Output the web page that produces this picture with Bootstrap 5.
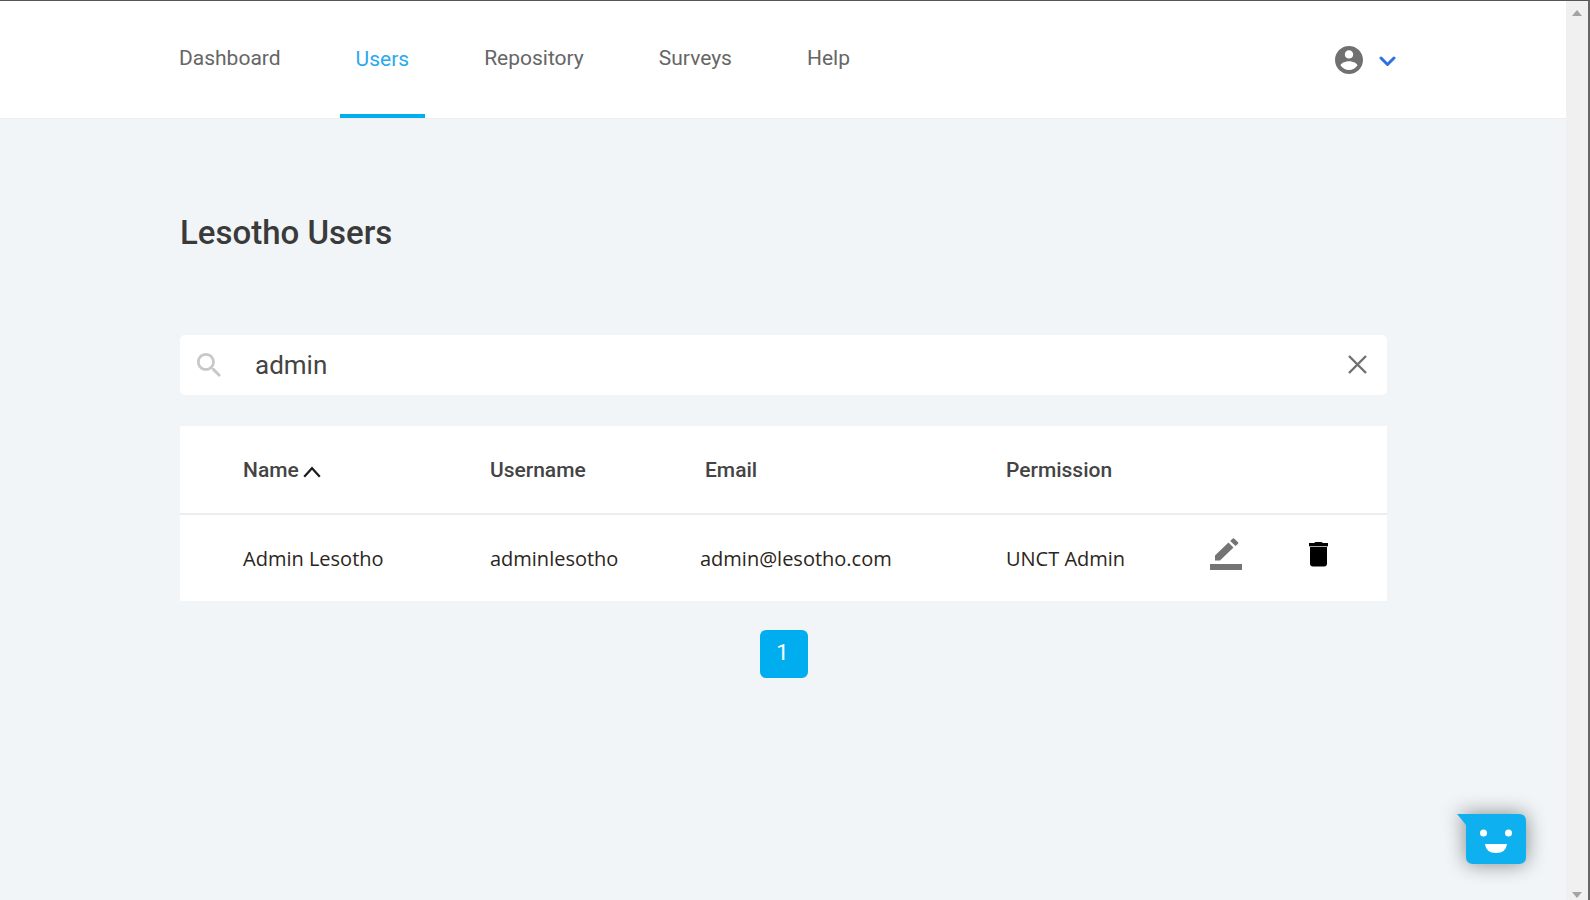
<!DOCTYPE html>
<html lang="en">
<head>
<meta charset="utf-8">
<meta name="viewport" content="width=device-width, initial-scale=1">
<title>Lesotho Users</title>
<link href="https://cdn.jsdelivr.net/npm/bootstrap@5.3.0/dist/css/bootstrap.min.css" rel="stylesheet">
<style>
  body { font-family: Roboto, "Liberation Sans", sans-serif; font-size: 21px; line-height: 28px; color: #3c3c3c; background: #f1f5f8; }
  .frame { border-top: 1px solid #555; border-right: 2px solid #666; }
  .topbar { height: 118px; border-bottom: 1px solid #ebedef; padding: 0 170px 0 163px; }
  .main-nav { gap: 43px; }
  .main-nav .nav-link { padding: 43px 16px 0; color: #666; height: 117px; border-bottom: 4px solid transparent; }
  .main-nav .nav-link.active { padding-top: 44px; color: #2aa9ee; border-color: #00aeef; }
  .account { gap: 16px; }
  .content { padding: 94px 179px 0 180px; }
  .page-title { font-size: 33px; line-height: 40px; font-weight: 500; margin-bottom: 82px; color: #3a3a3a; }
  .search { height: 60px; border-radius: 5px; margin-bottom: 31px; padding: 0 20px 0 17px; }
  .search input { font-size: 26px; line-height: 40px; height: 40px; color: #444; background: none; margin-left: 30px; outline: 0; }
  .search .icon-btn { margin-bottom: 2px; }
  .users { table-layout: fixed; }
  .users th, .users td { padding: 0; vertical-align: middle; height: 88px; text-align: left; }
  .users th { font-weight: 500; border-bottom: 2px solid #ececec; color: #444; }
  .users td { font-family: "Open Sans", "Noto Sans", sans-serif; font-size: 20px; color: #2b261c; height: 87px; border: 0; padding-top: 2px; }
  .users th:first-child, .users td:first-child { padding-left: 63px; }
  .users th.email { padding-left: 5px; }
  .users td.action { padding: 0; }
  .icon-btn { line-height: 0; }
  .users .icon-btn { display: block; margin-bottom: 8px; }
  .pagination { margin-top: 29px; }
  .page-link.number { width: 48px; height: 48px; border-radius: 6px; background: #00aeef; font-size: 22px; padding: 0 2px 2px 0; }
  .scroll-track { width: 22px; background: #f0f0f0; padding: 9px 0 2px; }
  .chat { right: 64px; bottom: 36px; line-height: 0; filter: drop-shadow(0 0 10px rgba(0,0,0,.45)); }
  svg { display: block; }
</style>
</head>
<body>
<div class="frame d-flex min-vh-100">
  <div class="flex-grow-1 d-flex flex-column">
    <header class="topbar bg-white d-flex justify-content-between">
      <nav aria-label="Main">
        <ul class="main-nav nav flex-nowrap">
          <li class="nav-item"><a class="nav-link" href="#">Dashboard</a></li>
          <li class="nav-item"><a class="nav-link active" aria-current="page" href="#">Users</a></li>
          <li class="nav-item"><a class="nav-link" href="#">Repository</a></li>
          <li class="nav-item"><a class="nav-link" href="#">Surveys</a></li>
          <li class="nav-item"><a class="nav-link" href="#">Help</a></li>
        </ul>
      </nav>
      <button class="account icon-btn border-0 bg-transparent p-0 d-flex align-items-center" type="button" aria-label="Account menu">
        <svg width="28" height="28" viewBox="2 2 20 20" fill="#707070"><path d="M12 2C6.480 2 2 6.480 2 12s4.480 10 10 10 10-4.480 10-10S17.520 2 12 2zm0 3c1.660 0 3 1.340 3 3s-1.340 3-3 3-3-1.340-3-3 1.340-3 3-3zm0 14.200c-2.500 0-4.710-1.280-6-3.220.030-1.990 4-3.080 6-3.080 1.990 0 5.970 1.090 6 3.080-1.290 1.940-3.500 3.220-6 3.220z"/></svg>
        <svg width="17" height="11" viewBox="0 0 17 11" fill="none" stroke="#2f6fe4" stroke-width="3" stroke-linecap="round" stroke-linejoin="round" class="mt-1"><path d="M2 2l6.500 6.500L15 2"/></svg>
      </button>
    </header>

    <main class="content flex-grow-1">
      <h1 class="page-title">Lesotho Users</h1>

      <form class="search bg-white d-flex align-items-center" role="search">
        <label for="q" aria-label="Search users">
          <svg width="24" height="24" viewBox="3 3 17.500 17.500" fill="#c8c8c8"><path d="M15.500 14h-.790l-.280-.270C15.410 12.590 16 11.110 16 9.500 16 5.910 13.090 3 9.500 3S3 5.910 3 9.500 5.910 16 9.500 16c1.610 0 3.090-.590 4.230-1.570l.270.280v.790l5 4.990L20.490 19l-4.990-5zm-6 0C7.010 14 5 11.990 5 9.500S7.010 5 9.500 5 14 7.010 14 9.500 11.990 14 9.500 14z"/></svg>
        </label>
        <input class="flex-grow-1 border-0 py-0 px-1" id="q" type="text" aria-label="Search users" value="admin">
        <button class="icon-btn border-0 bg-transparent p-0" type="button" aria-label="Clear search">
          <svg width="19" height="19" viewBox="0 0 19 19" stroke="#707070" stroke-width="2.400"><path d="M1 1l17 17M18 1L1 18"/></svg>
        </button>
      </form>

      <table class="users w-100 bg-white">
        <colgroup>
          <col style="width:25.68%"><col style="width:17.4%"><col style="width:25.35%"><col style="width:16.9%"><col style="width:8.2%"><col>
        </colgroup>
        <thead>
          <tr>
            <th scope="col" aria-sort="ascending"><span class="d-flex align-items-center gap-1">Name
              <svg width="18" height="12" viewBox="0 0 18 12" fill="none" stroke="#1c1c1c" stroke-width="2.200" class="mt-1"><path d="M1.200 10.800L9 2.200l7.800 8.600"/></svg></span></th>
            <th scope="col">Username</th>
            <th scope="col" class="email">Email</th>
            <th scope="col">Permission</th>
            <th scope="col" aria-label="Edit"></th>
            <th scope="col" aria-label="Delete"></th>
          </tr>
        </thead>
        <tbody>
          <tr>
            <td>Admin Lesotho</td>
            <td>adminlesotho</td>
            <td>admin@lesotho.com</td>
            <td>UNCT Admin</td>
            <td class="action"><button class="icon-btn border-0 bg-transparent p-0" type="button" aria-label="Edit Admin Lesotho">
              <svg width="32" height="32" viewBox="0 0 32 32" fill="#747474"><path d="M0 26h32v6H0zM5 17.500L18.500 4.500l5 5L10 22.500H5zM20.200 2.900L22.400.7q1-.9 2 0l3.400 3.300q.9 1 0 2L25.500 8z"/></svg></button></td>
            <td class="action"><button class="icon-btn border-0 bg-transparent p-0" type="button" aria-label="Delete Admin Lesotho">
              <svg width="19" height="25" viewBox="0 0 19 25"><path d="M0 1h5l1.500-1h6L14 1h5v3H0z"/><path d="M0 4h19v1H0z" fill="#aaa"/><path d="M1 5h17v16.500q0 3-3 3H4q-3 0-3-3z"/></svg></button></td>
          </tr>
        </tbody>
      </table>

      <nav aria-label="Pages">
        <ul class="pagination justify-content-center mb-0">
          <li class="page-item"><a class="page-link number border-0 text-white d-flex align-items-center justify-content-center" href="#" aria-current="page">1</a></li>
        </ul>
      </nav>
    </main>
  </div>

  <div class="scroll-track flex-shrink-0 d-flex flex-column justify-content-between align-items-center" aria-hidden="true">
    <svg width="10" height="6" viewBox="0 0 10 6" fill="#a3a3a3"><path d="M0 6l5-6 5 6z"/></svg>
    <svg width="10" height="6" viewBox="0 0 10 6" fill="#a3a3a3"><path d="M0 0h10L5 6z"/></svg>
  </div>
</div>

<button class="chat position-fixed border-0 bg-transparent p-0" type="button" aria-label="Open chat">
  <svg width="69" height="50" viewBox="0 0 69 50"><path fill="#0fb0f0" d="M0 0h62q7 0 7 7v36q0 7-7 7H16q-7 0-7-7V11z"/><circle cx="26.500" cy="19" r="3.500" fill="#fff"/><circle cx="51.500" cy="19" r="3.500" fill="#fff"/><path fill="#fff" d="M28 30h22q-1 9-11 9t-11-9z"/></svg>
</button>
<script src="https://cdn.jsdelivr.net/npm/bootstrap@5.3.0/dist/js/bootstrap.bundle.min.js"></script>
</body>
</html>
